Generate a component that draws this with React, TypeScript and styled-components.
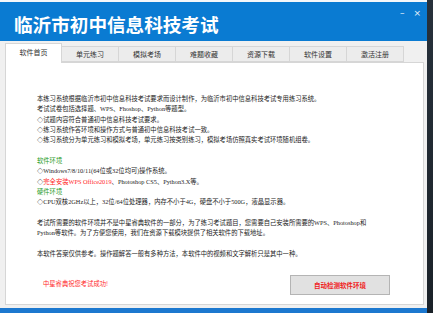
import React from "react";
import styled, { createGlobalStyle } from "styled-components";

const Global = createGlobalStyle`
  html, body { margin: 0; padding: 0; background: #1d252d; overflow: hidden; }
  #root { width: 433px; height: 313px; }
`;

const Screen = styled.div`
  display: flex;
  width: 433px;
  height: 313px;
`;

const LeftCol = styled.div`
  display: flex;
  flex-direction: column;
  width: 427px;
`;

const EdgeStrip = styled.div`
  width: 6px;
  background: linear-gradient(#27313b, #1a2128);
`;

const Taskbar = styled.div`
  height: 5px;
  background: #1c78cf;
`;

const Window = styled.div`
  height: 308px;
  box-sizing: border-box;
  border-top: 2px solid #f4f7fa;
  background: #f0f0f0;
  display: flex;
  flex-direction: column;
`;

const TitleBar = styled.div`
  height: 39px;
  flex: none;
  background: #0a7bd2;
  display: flex;
  justify-content: space-between;
  align-items: flex-start;
`;

const Title = styled.h1`
  margin: 0;
  padding: 13px 0 0 14px;
  font-family: "Noto Sans CJK SC", sans-serif;
  font-weight: 700;
  font-size: 18.6px;
  line-height: 1;
  color: #ffffff;
  letter-spacing: 0;
`;

const Controls = styled.div`
  display: flex;
  gap: 9px;
  padding: 4px 6px 0 0;
  color: #e8f2fb;
  font-family: "DejaVu Sans", sans-serif;
  font-size: 9px;
  line-height: 14px;
`;

const TabBar = styled.div`
  height: 21px;
  flex: none;
  display: flex;
  align-items: flex-end;
  padding-left: 5px;
`;

const Tab = styled.div<{ $active?: boolean }>`
  box-sizing: border-box;
  width: 57px;
  height: ${(p) => (p.$active ? "20px" : "16px")};
  margin-bottom: ${(p) => (p.$active ? "-1px" : "0")};
  position: relative;
  z-index: ${(p) => (p.$active ? 1 : 0)};
  background: ${(p) => (p.$active ? "#ffffff" : "#ececec")};
  border: 1px solid #d6d6d6;
  border-bottom: ${(p) => (p.$active ? "none" : "1px solid #d6d6d6")};
  border-left: ${(p) => (p.$active ? "1px solid #d6d6d6" : "none")};
  display: flex;
  align-items: center;
  justify-content: center;
  padding-bottom: ${(p) => (p.$active ? "3px" : "0")};
  font-family: "Noto Sans CJK SC", sans-serif;
  font-size: 7px;
  color: #333333;
`;

const Panel = styled.div`
  box-sizing: border-box;
  height: 243px;
  margin: 0 3px 0 5px;
  background: #ffffff;
  border: 1px solid #d6d6d6;
  padding: 31px 33px 9px 31px;
  display: flex;
  flex-direction: column;
`;

const Body = styled.div`
  font-family: "Liberation Serif", "Noto Sans CJK SC", serif;
  font-size: 6.3px;
  line-height: 10.33px;
  color: #1c1c1c;
  white-space: nowrap;
`;

const Line = styled.div<{ $tone?: "green" | "normal" }>`
  height: 10.33px;
  color: ${(p) => (p.$tone === "green" ? "#1f9a1f" : "inherit")};
`;

const Red = styled.span`
  color: #ff1f1f;
`;

const Footer = styled.div`
  margin-top: auto;
  display: flex;
  justify-content: space-between;
  align-items: center;
`;

const Wish = styled.div`
  margin: 0 0 3px 6px;
  font-family: "Noto Sans CJK SC", sans-serif;
  font-size: 6.3px;
  color: #ff2a2a;
`;

const CheckButton = styled.button`
  box-sizing: border-box;
  width: 100px;
  height: 20px;
  background: #e1e1e1;
  border: 1px solid #b4b4b4;
  border-radius: 0;
  padding: 0;
  font-family: "Noto Sans CJK SC", sans-serif;
  font-size: 6.5px;
  font-weight: 700;
  color: #f01c1c;
`;

const tabs = ["软件首页", "单元练习", "模拟考场", "难题收藏", "资源下载", "软件设置", "激活注册"];

export default function App() {
  return (
    <>
      <Global />
      <Screen>
        <LeftCol>
          <Window>
            <TitleBar>
              <Title>临沂市初中信息科技考试</Title>
              <Controls>
                <span>–</span>
                <span>×</span>
              </Controls>
            </TitleBar>
            <TabBar>
              {tabs.map((t, i) => (
                <Tab key={t} $active={i === 0}>
                  {t}
                </Tab>
              ))}
            </TabBar>
            <Panel>
              <Body>
                <Line>本练习系统根据临沂市初中信息科技考试要求而设计制作，为临沂市初中信息科技考试专用练习系统。</Line>
                <Line>考试试卷包括选择题、WPS、Fhoshop、Python等题型。</Line>
                <Line>◇试题内容符合普通初中信息科技考试要求。</Line>
                <Line>◇练习系统作答环境和操作方式与普通初中信息科技考试一致。</Line>
                <Line>◇练习系统分为单元练习和模拟考场，单元练习按类别练习，模拟考场仿照真实考试环境随机组卷。</Line>
                <Line />
                <Line $tone="green">软件环境</Line>
                <Line>◇Windows7/8/10/11(64位或32位均可)操作系统。</Line>
                <Line>
                  ◇<Red>完全安装WPS Office2019</Red>、Photoshop CS5、Python3.X等。
                </Line>
                <Line $tone="green">硬件环境</Line>
                <Line>◇CPU双核2GHz以上，32位/64位处理器，内存不小于4G，硬盘不小于500G，液晶显示器。</Line>
                <Line />
                <Line>考试所需要的软件环境并不是中星睿典软件的一部分，为了练习考试题目，您需要自己安装所需要的WPS、Photoshop和</Line>
                <Line>Python等软件。为了方便您使用，我们在资源下载模块提供了相关软件的下载地址。</Line>
                <Line />
                <Line>本软件答案仅供参考。操作题解答一般有多种方法，本软件中的视频和文字解析只是其中一种。</Line>
              </Body>
              <Footer>
                <Wish>中星睿典祝您考试成功!</Wish>
                <CheckButton>自动检测软件环境</CheckButton>
              </Footer>
            </Panel>
          </Window>
          <Taskbar />
        </LeftCol>
        <EdgeStrip />
      </Screen>
    </>
  );
}
